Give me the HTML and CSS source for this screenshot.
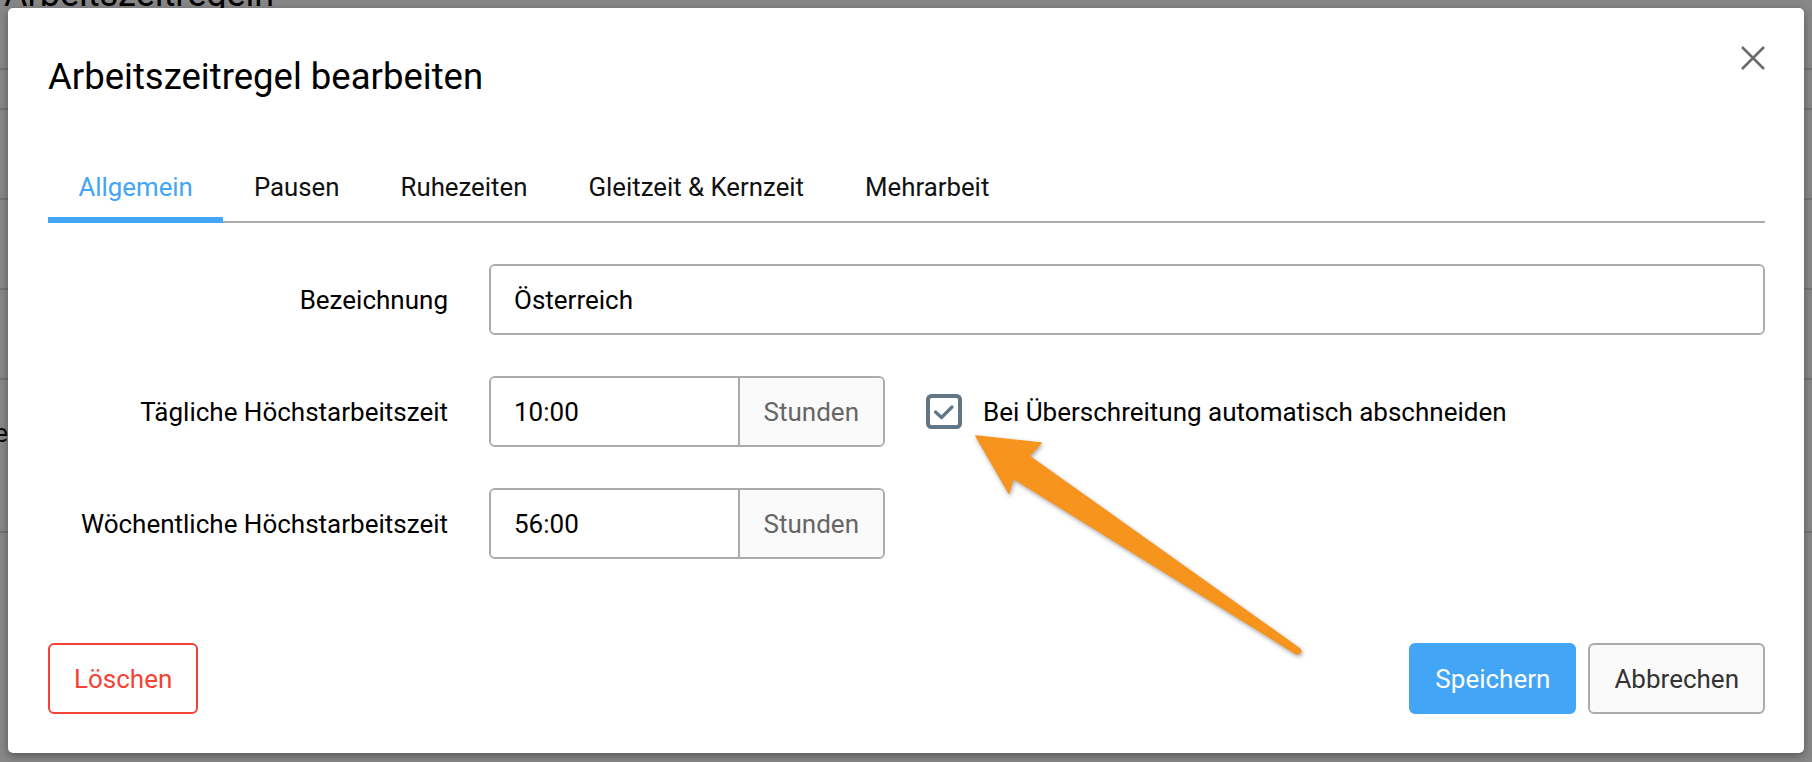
FILE: index.html
```html
<!DOCTYPE html>
<html lang="de">

<head>
  <meta charset="UTF-8">
  <meta name="viewport" content="width=device-width, initial-scale=1.0">
  <title>Arbeitszeitregel bearbeiten</title>
  <link rel="stylesheet" href="styles.css">
</head>

<body>
  <div class="page">
    <h1 class="page_title">Arbeitszeitregeln</h1>
    <div class="page_row row_1"></div>
    <div class="page_row row_2"></div>
    <div class="page_row row_3"></div>
    <div class="page_row row_3"></div>
    <div class="page_row row_3"></div>
    <div class="page_row row_4">
      <div class="page_cell">Vorlage</div>
    </div>
    <div class="page_row row_5"></div>
  </div>

  <div class="overlay"></div>

  <div class="modal">
    <div class="modal_head">
      <h2 class="modal_title">Arbeitszeitregel bearbeiten</h2>
      <button type="button" class="close_btn">
        <svg width="24" height="24" viewBox="0 0 24 24">
          <path d="M1 1 L23 23 M23 1 L1 23" stroke="#6b6b6b" stroke-width="2.6" fill="none" />
        </svg>
      </button>
    </div>

    <div class="tabs">
      <div class="tab active">Allgemein</div>
      <div class="tab">Pausen</div>
      <div class="tab">Ruhezeiten</div>
      <div class="tab">Gleitzeit &amp; Kernzeit</div>
      <div class="tab">Mehrarbeit</div>
    </div>

    <div class="form">
      <div class="form_row">
        <label class="form_label">Bezeichnung</label>
        <div class="field wide">
          <input type="text" class="field_input" value="Österreich">
        </div>
      </div>

      <div class="form_row">
        <label class="form_label">Tägliche Höchstarbeitszeit</label>
        <div class="field short">
          <input type="text" class="field_input" value="10:00">
          <div class="field_addon">Stunden</div>
        </div>
        <label class="check">
          <svg class="check_box" width="36" height="36" viewBox="0 0 36 36">
            <rect x="2" y="2" width="32" height="31" rx="3.5" fill="none" stroke="#5f7786" stroke-width="4" />
            <path d="M9.5 18 L15.5 23.5 L26 13" fill="none" stroke="#5f7786" stroke-width="3.2" stroke-linecap="round" stroke-linejoin="round" />
          </svg>
          <span>Bei Überschreitung automatisch abschneiden</span>
        </label>
      </div>

      <div class="form_row">
        <label class="form_label">Wöchentliche Höchstarbeitszeit</label>
        <div class="field short">
          <input type="text" class="field_input" value="56:00">
          <div class="field_addon">Stunden</div>
        </div>
      </div>
    </div>

    <div class="modal_foot">
      <button type="button" class="btn delete_btn">Löschen</button>
      <div class="foot_right">
        <button type="button" class="btn save_btn">Speichern</button>
        <button type="button" class="btn cancel_btn">Abbrechen</button>
      </div>
    </div>
  </div>

  <svg class="arrow" width="360" height="250" viewBox="960 420 360 250">
    <polygon points="976,436 1041,443 1029,456 1300,649 1301,652 1298,654 1295,653 1013,478 1009,493"
      fill="#f7941e" stroke="#f7941e" stroke-width="1.5" stroke-linejoin="round" />
  </svg>
</body>

</html>
```

FILE: styles.css
```css
* {
  box-sizing: border-box;
}

body {
  width: 1812px;
  height: 762px;

  margin: 0;
  overflow: hidden;
  position: relative;

  font-family: Roboto, "Liberation Sans", sans-serif;
  font-size: 26px;
  color: #111;
  background-color: white;
}

/* page behind the dialog */
.page {
  width: 1812px;
}

.page_title {
  margin: -27px 0 0 4px;

  font-size: 36px;
  font-weight: 400;
  line-height: 43px;
  color: black;
}

.page_row {
  border-bottom: 2px solid #dcdcdc;
}

.row_1 {
  height: 54px;
}

.row_2 {
  height: 40px;
}

.row_3 {
  height: 90px;
}

.row_4 {
  height: 153px;
  padding-top: 38px;
}

.row_5 {
  height: 120px;
  border-bottom: none;
}

.page_cell {
  width: 8px;

  direction: rtl;
  white-space: nowrap;
  line-height: 30px;
}

.overlay {
  position: absolute;
  top: 0;
  left: 0;
  right: 0;
  bottom: 0;

  background-color: rgba(0, 0, 0, 0.47);
}

/* dialog */
.modal {
  width: 1796px;
  height: 745px;

  position: absolute;
  top: 8px;
  left: 8px;

  display: flex;
  flex-direction: column;

  padding: 0 39px 39px 40px;
  background-color: white;
  border-radius: 5px;
  box-shadow: 0 3px 8px rgba(0, 0, 0, 0.35);
}

.modal_head {
  display: flex;
  justify-content: space-between;
  align-items: flex-start;

  padding-top: 38px;
}

.modal_title {
  margin: 9px 0 0 0;

  font-size: 36.5px;
  font-weight: 400;
  line-height: 43px;
  color: black;
}

.close_btn {
  width: 24px;
  height: 24px;

  display: flex;
  padding: 0;
  border: none;
  background: none;
}

.tabs {
  display: flex;

  margin-top: 54px;
  border-bottom: 2px solid #ababab;
}

.tab {
  height: 71px;

  padding: 20px 30.5px 0 30.5px;
  margin-bottom: -2px;

  font-size: 25.8px;
  line-height: 30px;
  color: #111;
  border-bottom: 6px solid transparent;
}

.tab.active {
  color: #42a5f5;
  border-bottom-color: #42a5f5;
}

/* form */
.form {
  display: flex;
  flex-direction: column;
  gap: 41px;

  margin-top: 41px;
}

.form_row {
  height: 71px;

  display: flex;
  align-items: center;
}

.form_label {
  width: 400px;

  margin-right: 41px;
  text-align: right;
  color: black;
}

.field {
  height: 71px;

  display: flex;

  border: 2px solid #ababab;
  border-radius: 6px;
  overflow: hidden;
}

.wide {
  flex: 1;
}

.short {
  width: 396px;
}

.field_input {
  width: 100%;
  min-width: 0;

  flex: 1;
  padding: 0 23px;
  border: none;
  outline: none;

  font-family: inherit;
  font-size: 26px;
  color: black;
  background: white;
}

.field_addon {
  display: flex;
  align-items: center;

  padding: 0 24px;
  border-left: 2px solid #ababab;

  color: #666;
  background-color: #fafafa;
}

.check {
  display: flex;
  align-items: center;
  gap: 21px;

  margin-left: 41px;
  color: black;
}

.check_box {
  display: block;
}

/* footer */
.modal_foot {
  display: flex;
  justify-content: space-between;

  margin-top: auto;
}

.foot_right {
  display: flex;
  gap: 12px;
}

.btn {
  height: 71px;

  padding: 0 24px;
  border: 2px solid transparent;
  border-radius: 6px;

  font-family: inherit;
  font-size: 26px;
}

.delete_btn {
  color: #f44336;
  background-color: white;
  border-color: #f44336;
}

.save_btn {
  color: white;
  background-color: #42a5f5;
  border-color: #42a5f5;
}

.cancel_btn {
  color: #333;
  background-color: #fafafa;
  border-color: #ababab;
}

.arrow {
  position: absolute;
  top: 420px;
  left: 960px;

  filter: drop-shadow(1px 2px 2px rgba(0, 0, 0, 0.35));
}
```
